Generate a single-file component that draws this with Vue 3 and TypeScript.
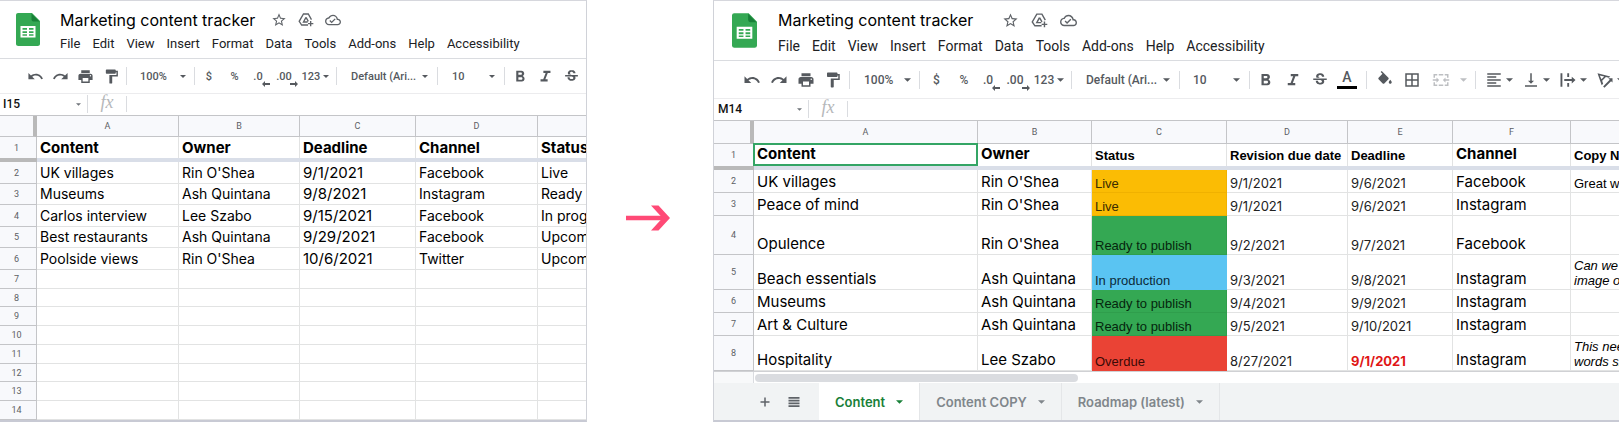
<script setup lang="ts">
interface Cell {
  text: string
  kind?: string
}
interface Row {
  height: number
  cells: Cell[]
}
interface Sheet {
  id: string
  cellName: string
  columns: number[]
  header: Row
  rows: Row[]
  tools: string[]
  selected: boolean
  tabs: string[]
}

const menus = ['File', 'Edit', 'View', 'Insert', 'Format', 'Data', 'Tools', 'Add-ons', 'Help', 'Accessibility']

const baseTools = [
  'undo', 'redo', 'print', 'paint', '|', 'zoom', '|', 'currency', 'percent', 'decLess', 'decMore', 'number', '|',
  'font', '|', 'size', '|', 'bold', 'italic', 'strike',
]
const moreTools = [
  'color', '|', 'fill', 'borders', 'merge', 'mergeMenu', '|', 'align', 'valign', 'wrap', 'rotate',
]

const toolNames: Record<string, string> = {
  undo: 'Undo', redo: 'Redo', print: 'Print', paint: 'Paint format', bold: 'Bold', italic: 'Italic',
  strike: 'Strikethrough', color: 'Text color', fill: 'Fill color', borders: 'Borders', merge: 'Merge cells',
  mergeMenu: 'Merge type', align: 'Horizontal align', valign: 'Vertical align', wrap: 'Text wrapping',
  rotate: 'Text rotation', currency: 'Format as currency', percent: 'Format as percent',
  decLess: 'Decrease decimal places', decMore: 'Increase decimal places', number: 'More formats',
  zoom: 'Zoom', font: 'Font', size: 'Font size',
}
const selects: Record<string, string> = { zoom: '100%', font: 'Default (Ari...', size: '10' }
const labels: Record<string, string> = { currency: '$', percent: '%', decLess: '.0', decMore: '.00', number: '123' }
const icons: Record<string, string> = {
  undo: 'M12.5 8c-2.65 0-5.05.99-6.9 2.6L2 7v9h9l-3.62-3.62c1.39-1.16 3.16-1.88 5.12-1.88 3.54 0 6.55 2.31 7.6 5.5l2.37-.78C21.08 11.03 17.15 8 12.5 8z',
  redo: 'M18.4 10.6C16.55 8.99 14.15 8 11.5 8c-4.65 0-8.58 3.03-9.96 7.22L3.9 16c1.05-3.19 4.05-5.5 7.6-5.5 1.95 0 3.73.72 5.12 1.88L13 16h9V7l-3.6 3.6z',
  print: 'M19 8H5c-1.66 0-3 1.34-3 3v6h4v4h12v-4h4v-6c0-1.66-1.34-3-3-3zm-3 11H8v-5h8v5zm3-7c-.55 0-1-.45-1-1s.45-1 1-1 1 .45 1 1-.45 1-1 1zm-1-9H6v4h12V3z',
  paint: 'M18 4V3c0-.55-.45-1-1-1H5c-.55 0-1 .45-1 1v4c0 .55.45 1 1 1h12c.55 0 1-.45 1-1V6h1v4H9v11c0 .55.45 1 1 1h2c.55 0 1-.45 1-1v-9h8V4h-3z',
  bold: 'M15.6 10.79c.97-.67 1.65-1.77 1.65-2.79 0-2.26-1.75-4-4-4H6v15h8.04c2.09 0 3.71-1.7 3.71-3.79 0-1.52-.86-2.82-2.15-3.42zM9 6.5h3.5c.83 0 1.5.67 1.5 1.5s-.67 1.5-1.5 1.5H9v-3zm4 10H9v-3.5h4c.97 0 1.75.78 1.75 1.75S13.97 16.5 13 16.5z',
  italic: 'M9 4v3h3.2l-3.4 9H5v3h10v-3h-3.2l3.4-9H19V4z',
  strike: 'M7.24 8.75c-.26-.48-.39-1.03-.39-1.67 0-.61.13-1.16.4-1.67.26-.5.63-.93 1.11-1.29.48-.35 1.05-.63 1.7-.83.66-.19 1.39-.29 2.18-.29.81 0 1.54.11 2.21.34.66.22 1.23.54 1.69.94.47.4.83.88 1.08 1.43s.38 1.15.38 1.81h-3.01c0-.31-.05-.59-.15-.85-.09-.27-.24-.49-.44-.68-.2-.19-.45-.33-.75-.44-.3-.1-.66-.16-1.06-.16-.39 0-.74.04-1.03.13s-.53.21-.72.36c-.19.16-.34.34-.44.55-.1.21-.15.43-.15.66 0 .48.25.88.74 1.21.38.25.77.48 1.41.7H7.39c-.05-.08-.11-.17-.15-.25zM21 12v-2H3v2h9.62c.18.07.4.14.55.2.37.17.66.34.87.51s.35.36.43.57c.07.2.11.43.11.69 0 .23-.05.45-.14.66-.09.2-.23.38-.42.53-.19.15-.42.26-.71.35-.29.08-.63.13-1.01.13-.43 0-.83-.04-1.18-.13s-.66-.23-.91-.42c-.25-.19-.45-.44-.59-.75s-.25-.76-.25-1.21H6.4c0 .55.08 1.13.24 1.58s.37.85.65 1.21c.28.35.6.66.98.92.37.26.78.48 1.22.65.44.17.9.3 1.38.39.48.08.96.13 1.44.13.8 0 1.53-.09 2.18-.28s1.21-.45 1.67-.79c.46-.34.82-.77 1.07-1.27s.38-1.07.38-1.71c0-.6-.1-1.14-.31-1.61-.05-.11-.11-.23-.17-.33H21z',
  fill: 'M16.56 8.94L7.62 0 6.21 1.41l2.38 2.38-5.15 5.15c-.59.59-.59 1.54 0 2.12l5.5 5.5c.29.29.68.44 1.06.44s.77-.15 1.06-.44l5.5-5.5c.59-.58.59-1.53 0-2.12zM19 11.5s-2 2.17-2 3.5c0 1.1.9 2 2 2s2-.9 2-2c0-1.33-2-3.5-2-3.5z',
  borders: 'M3 3v18h18V3H3zm8 16H5v-6h6v6zm0-8H5V5h6v6zm8 8h-6v-6h6v6zm0-8h-6V5h6v6z',
  merge: 'M2 4h5v2H4v3H2zM9 4h6v2H9zM17 4h5v5h-2V6h-3zM2 15h2v3h3v2H2zM9 18h6v2H9zM20 15h2v5h-5v-2h3zM1 11h5V8.500l3.500 3.500L6 15.500V13H1zM23 11h-5V8.500L14.500 12l3.500 3.500V13h5z',
  align: 'M15 15H3v2h12v-2zm0-8H3v2h12V7zM3 13h18v-2H3v2zm0 8h18v-2H3v2zM3 3v2h18V3H3z',
  valign: 'M16 13h-3V3h-2v10H8l4 4 4-4zM4 19v2h16v-2H4z',
  wrap: 'M2 3h2.500v18H2zM11 3h2.500v5H11zM11 16h2.500v5H11zM7 10.800h10V7.500l5 4.500-5 4.500v-3.300H7z',
  rotate: 'M2 3l17 4.200-1.800 1.900-4-1-5 5 1.300 4-1.900 1.900L2 3zm3 3l2.300 5L11 7.400 5 6zM9.500 20.500l8.800-8.800-1.900-1.900H22v5.600l-1.900-1.900-8.800 8.800z',
}
const withCaret = ['number', 'mergeMenu', 'align', 'valign', 'wrap', 'rotate']

const r = (height: number, ...texts: string[]): Row => ({
  height,
  cells: texts.map((t) => {
    const [text, kind] = t.split('::')
    return { text, kind }
  }),
})

const sheets: Sheet[] = [
  {
    id: 'before',
    cellName: 'I15',
    columns: [37, 142, 121, 116, 122, 120],
    header: r(21, 'Content', 'Owner', 'Deadline', 'Channel', 'Status'),
    rows: [
      r(22, 'UK villages', "Rin O'Shea", '9/1/2021::date', 'Facebook', 'Live'),
      r(21, 'Museums', 'Ash Quintana', '9/8/2021::date', 'Instagram', 'Ready to publish'),
      r(22, 'Carlos interview', 'Lee Szabo', '9/15/2021::date', 'Facebook', 'In progress'),
      r(21, 'Best restaurants', 'Ash Quintana', '9/29/2021::date', 'Facebook', 'Upcoming'),
      r(22, 'Poolside views', "Rin O'Shea", '10/6/2021::date', 'Twitter', 'Upcoming'),
      ...[19, 18, 19, 19, 19, 18, 19, 19].map((h) => r(h, '', '', '', '', '')),
    ],
    tools: baseTools,
    selected: false,
    tabs: [],
  },
  {
    id: 'after',
    cellName: 'M14',
    columns: [40, 224, 114, 135, 121, 105, 118, 120],
    header: r(22, 'Content', 'Owner', 'Status::small', 'Revision due date::small', 'Deadline::small', 'Channel', 'Copy Notes::small'),
    rows: [
      r(23, 'UK villages', "Rin O'Shea", 'Live::small amber', '9/1/2021::date', '9/6/2021::date', 'Facebook', 'Great work::small'),
      r(23, 'Peace of mind', "Rin O'Shea", 'Live::small amber', '9/1/2021::date', '9/6/2021::date', 'Instagram', ''),
      r(39, 'Opulence', "Rin O'Shea", 'Ready to publish::small green', '9/2/2021::date', '9/7/2021::date', 'Facebook', ''),
      r(35, 'Beach essentials', 'Ash Quintana', 'In production::small blue', '9/3/2021::date', '9/8/2021::date', 'Instagram', 'Can we\nimage of::small note'),
      r(23, 'Museums', 'Ash Quintana', 'Ready to publish::small green', '9/4/2021::date', '9/9/2021::date', 'Instagram', ''),
      r(23, 'Art & Culture', 'Ash Quintana', 'Ready to publish::small green', '9/5/2021::date', '9/10/2021::date', 'Instagram', ''),
      r(35, 'Hospitality', 'Lee Szabo', 'Overdue::small red', '8/27/2021::date', '9/1/2021::date late', 'Instagram', 'This needs\nwords shorter::small note'),
    ],
    tools: [...baseTools, ...moreTools],
    selected: true,
    tabs: ['Content', 'Content COPY', 'Roadmap (latest)'],
  },
]
const letters = 'ABCDEFG'.split('')
const total = (w: number[]) => w.reduce((a, b) => a + b, 0)
</script>

<template>
  <main class="page">
    <template v-for="s in sheets" :key="s.id">
      <div v-if="s.id === 'after'" class="between">
        <svg viewBox="0 0 44 26" aria-hidden="true">
          <path d="M0 13H40" stroke="#ff4a76" stroke-width="4.500" />
          <path d="M25 0.500h7.500L44 13 32.500 25.500H25L36.500 13z" fill="#ff4a76" />
        </svg>
      </div>
      <section class="sheet" :class="s.id">
        <header class="top">
          <svg class="logo" viewBox="0 0 24 33" aria-hidden="true">
            <path d="M2 0h14l8 8v22.500a2.300 2.300 0 0 1-2.300 2.500H2.300A2.300 2.300 0 0 1 0 30.500v-28A2.300 2.300 0 0 1 2 0z" fill="#34a853" />
            <path d="M15.500 0.500L23.500 8.500H17.500a2 2 0 0 1-2-2z" fill="#188038" />
            <path d="M4.500 13h15v11.500h-15zM6.500 15v1.800h4.500V15zM13 15v1.800h4.500V15zM6.500 18.200V20h4.500v-1.800zM13 18.200V20h4.500v-1.800zM6.500 21.300v1.500h4.500v-1.500zM13 21.300v1.500h4.500v-1.500z" fill="#fff" fill-rule="evenodd" />
          </svg>
          <div class="head">
            <div class="title-row">
              <h1>Marketing content tracker</h1>
              <button type="button" aria-label="Star">
                <svg viewBox="0 0 24 24"><path d="M22 9.240l-7.190-.62L12 2 9.190 8.630 2 9.240l5.460 4.730L5.820 21 12 17.270 18.180 21l-1.630-7.030L22 9.240zM12 15.400l-3.760 2.270 1-4.280-3.320-2.880 4.380-.38L12 6.100l1.710 4.040 4.380.38-3.320 2.880 1 4.280L12 15.400z" /></svg>
              </button>
              <button type="button" aria-label="Add to Drive">
                <svg viewBox="0 0 24 24" fill="none" class="line"><path d="M15 19.500H5.500L1.800 14 8.200 3h7.200l4.800 8.500" /><path d="M12 8l-3.800 7h6.300M12 8l3.500 6" /><path d="M19 13.500v8M15 17.500h8" /></svg>
              </button>
              <button type="button" aria-label="Document status">
                <svg viewBox="0 0 24 24"><path d="M19.350 10.040C18.670 6.590 15.640 4 12 4 9.110 4 6.610 5.640 5.360 8.040 2.350 8.360 0 10.900 0 14c0 3.310 2.690 6 6 6h13c2.760 0 5-2.240 5-5 0-2.640-2.050-4.780-4.650-4.960zM19 18H6c-2.210 0-4-1.790-4-4 0-2.050 1.530-3.760 3.560-3.970l1.070-.11.5-.95C8.080 7.140 9.940 6 12 6c2.620 0 4.880 1.860 5.390 4.430l.3 1.500 1.530.11c1.560.1 2.780 1.410 2.780 2.960 0 1.650-1.350 3-3 3zm-9-3.820l-2.090-2.090L6.500 13.500 10 17l6.010-6.010-1.410-1.410z" /></svg>
              </button>
            </div>
            <nav class="menus">
              <button v-for="m in menus" :key="m" type="button">{{ m }}</button>
            </nav>
          </div>
        </header>

        <div class="toolbar" role="toolbar" aria-label="Formatting">
          <template v-for="(t, i) in s.tools" :key="i">
            <span v-if="t === '|'" class="sep"></span>
            <label v-else-if="selects[t]" class="pick" :class="t">
              <select :aria-label="toolNames[t]"><option>{{ selects[t] }}</option></select>
              <svg class="caret" viewBox="0 0 8 4"><path d="M0 0h8L4 4z" /></svg>
            </label>
            <button v-else type="button" :class="[t, { menu: withCaret.includes(t) }]" :aria-label="toolNames[t]">
              <template v-if="labels[t]">{{ labels[t] }}</template>
              <svg v-if="t === 'decLess'" class="arrow" viewBox="0 0 8 6"><path d="M0 3l3-3v2h5v2H3v2z" /></svg>
              <svg v-if="t === 'decMore'" class="arrow" viewBox="0 0 8 6"><path d="M8 3L5 0v2H0v2h5v2z" /></svg>
              <span v-if="t === 'color'" class="letter">A</span>
              <svg v-if="icons[t]" class="icon" viewBox="0 0 24 24"><path :d="icons[t]" /></svg>
              <svg v-if="withCaret.includes(t)" class="caret" viewBox="0 0 8 4"><path d="M0 0h8L4 4z" /></svg>
            </button>
          </template>
        </div>

        <div class="formula">
          <div class="name-box">
            <input type="text" :value="s.cellName" aria-label="Name box" />
            <button type="button" aria-label="Named ranges"><svg class="caret" viewBox="0 0 8 4"><path d="M0 0h8L4 4z" /></svg></button>
          </div>
          <label :for="`fx-${s.id}`">fx</label>
          <input :id="`fx-${s.id}`" type="text" class="fx-input" />
        </div>

        <div class="grid">
          <table :style="{ width: total(s.columns) + 'px' }">
            <colgroup><col v-for="(w, i) in s.columns" :key="i" :style="{ width: w + 'px' }" /></colgroup>
            <thead>
              <tr class="letters">
                <td class="corner"></td>
                <th v-for="(w, i) in s.columns.slice(1)" :key="i" scope="col">{{ i < s.columns.length - 2 ? letters[i] : '' }}</th>
              </tr>
            </thead>
            <tbody>
              <tr class="names" :style="{ height: s.header.height + 'px' }">
                <th scope="row">1</th>
                <td v-for="(c, i) in s.header.cells" :key="i" :class="[c.kind, { selected: s.selected && i === 0 }]">{{ c.text }}</td>
              </tr>
              <tr class="frozen"><td v-for="(w, i) in s.columns" :key="i"></td></tr>
              <tr v-for="(row, n) in s.rows" :key="n" :style="{ height: row.height + 'px' }">
                <th scope="row">{{ n + 2 }}</th>
                <td v-for="(c, i) in row.cells" :key="i" :class="c.kind">{{ c.text }}</td>
              </tr>
            </tbody>
          </table>
        </div>

        <template v-if="s.tabs.length">
          <div class="scroll"><span class="gutter"></span><span class="thumb"></span></div>
          <footer class="tabs">
            <button type="button" class="tab-tool" aria-label="Add sheet"><svg viewBox="0 0 24 24"><path d="M21 13.500h-7.500V21h-3v-7.500H3v-3h7.500V3h3v7.500H21z" /></svg></button>
            <button type="button" class="tab-tool" aria-label="All sheets"><svg viewBox="0 0 24 24"><path d="M1 2h22v3.500H1zM1 7.500h22V11H1zM1 13h22v3.500H1zM1 18.500h22V22H1z" /></svg></button>
            <button v-for="(t, i) in s.tabs" :key="t" type="button" class="tab" :class="{ active: i === 0 }">
              {{ t }}<svg class="caret" viewBox="0 0 8 4"><path d="M0 0h8L4 4z" /></svg>
            </button>
          </footer>
        </template>
      </section>
    </template>
  </main>
</template>

<style>
body { background: #fff; }
</style>

<style scoped>
.page {
  display: grid;
  grid-template-columns: 587fr 126fr 906fr;
  font-family: Roboto, "Liberation Sans", sans-serif;
  color: #202124;
}
.page * { box-sizing: border-box; }
button, input, select {
  font: inherit;
  color: inherit;
  border: 0;
  padding: 0;
  margin: 0;
  background: none;
  min-width: 0;
}
select { appearance: none; }
svg { display: block; fill: currentColor; flex: none; }
svg.line { fill: none; stroke: currentColor; stroke-width: 2; }

.between { display: flex; align-items: center; justify-content: center; padding-right: 4px; }
.between svg { width: 44px; height: 26px; margin-top: 14px; }

.sheet {
  min-width: 0;
  overflow: hidden;
  display: flex;
  flex-direction: column;
  border-top: 1px solid #d6d7dd;
  border-bottom: 2px solid #c8cad4;
}
.before { border-right: 1px solid #d0d2d8; }
.after { border-left: 1px solid #d0d2d8; }

.top { display: flex; border-bottom: 1px solid #dadce0; }
.before .top { height: 58px; padding: 12px 0 0 16px; gap: 20px; }
.after .top { height: 60px; padding: 12px 0 0 18px; gap: 21px; }
.before .logo { width: 24px; height: 33px; }
.after .logo { width: 25px; height: 35px; }
.head { display: flex; flex-direction: column; }
.title-row { display: flex; align-items: center; color: #5f6368; }
h1 { margin: 0; font-family: Inter, sans-serif; font-weight: 400; font-size: 16px; color: #000; white-space: nowrap; line-height: 20px; }
.before .title-row { height: 14px; gap: 11px; }
.after .title-row { height: 14px; gap: 12px; }
.before h1 { width: 200px; }
.after h1 { width: 212px; }
.before .title-row svg { width: 16px; height: 16px; }
.after .title-row svg { width: 17px; height: 17px; }
.menus { display: flex; gap: 12px; }
.before .menus { font-size: 13px; line-height: 15px; margin-top: 9px; }
.after .menus { font-size: 14px; line-height: 16px; margin-top: 11px; }

.toolbar {
  display: grid;
  align-items: center;
  border-bottom: 1px solid #ececee;
  color: #55595e;
  font-weight: 500;
  font-size: 11px;
}
.before .toolbar {
  height: 35px;
  padding-left: 22px;
  grid-template-columns: 26px 25px 25px 26px 5px 63px 4px 26px 25px 24px 28px 33px 8px 94px 7px 60px 7px 24px 26px 26px;
}
.after .toolbar {
  height: 38px;
  padding-left: 24px;
  font-size: 12px;
  grid-template-columns: 27px 27px 27px 27px 7px 64px 5px 29px 26px 24px 30px 36px 8px 101px 6px 64px 6px 28px 26px 27px 28px 10px 27px 28px 30px 14px 10px 37px 37px 37px 37px;
}
.toolbar button { display: flex; align-items: center; justify-content: center; height: 24px; }
.toolbar .menu { gap: 3px; }
.before .icon { width: 17px; height: 17px; }
.after .icon { width: 18px; height: 18px; }
.caret { width: 6px; height: 3px; }
.after .caret { width: 7px; height: 4px; }
.sep { justify-self: center; width: 1px; height: 18px; background: #dadce0; }
.pick { display: grid; align-items: center; }
.pick select { grid-area: 1 / 1; padding-left: 11px; width: 100%; height: 20px; }
.pick .caret { grid-area: 1 / 1; justify-self: end; margin-right: 6px; pointer-events: none; }
.toolbar .decLess, .toolbar .decMore { position: relative; padding-right: 2px; }
.arrow { position: absolute; right: 1px; bottom: 1px; width: 8px; height: 6px; }
.toolbar .color { flex-direction: column; }
.letter { font-size: 14px; line-height: 15px; }
.color::after { content: ""; width: 20px; height: 3px; background: #000; margin-top: 1px; }
.toolbar .merge, .toolbar .mergeMenu { color: #bdbfc2; }

.formula { display: flex; align-items: center; height: 21px; font-size: 12px; padding-bottom: 1px; }
.name-box { display: flex; align-items: center; justify-content: space-between; height: 18px; padding-right: 6px; border-right: 1px solid #dadce0; color: #111; font-weight: 500; }
.before .name-box { width: 88px; padding-left: 3px; }
.after .name-box { width: 95px; padding-left: 4px; }
.name-box input { width: 60px; }
.name-box .caret { color: #70757a; width: 5px; height: 3px; }
.formula label { width: 39px; text-align: center; font: italic 18px/12px "Liberation Serif", serif; color: #b5b7ba; border-right: 1px solid #dadce0; height: 16px; }
.fx-input { flex: 1; }

.grid { border-top: 1px solid #c4c5c8; overflow: hidden; }
table { table-layout: fixed; border-collapse: separate; border-spacing: 0; background: #fff; }
td, th {
  padding: 0 3px;
  border: solid #e2e3e3;
  border-width: 0 1px 1px 0;
  overflow: hidden;
  white-space: pre;
  text-align: left;
  font-weight: 400;
}
td { font-family: Inter, sans-serif; color: #000; }
th { background: #f8f9fc; color: #5c6064; font-size: 9px; line-height: 10px; text-align: center; border-color: #c4c5c8; }
.before th[scope="row"] { padding-right: 6px; }
.letters { height: 21px; }
.after .letters { height: 23px; }
.corner { background: #f8f9fc; border-right: 4px solid #b9b9b9; border-bottom-color: #c4c5c8; }
.before td { font-size: 14px; line-height: 18px; }
.before .names td, .before td.date { font-size: 15px; }
.after td { font-size: 15px; line-height: 18px; vertical-align: bottom; padding-bottom: 1px; }
.before .names td, .after .names td { font-weight: 700; border-bottom: 0; }
.names th { border-bottom: 0; }
.frozen { height: 4px; }
.before .frozen td, .after .frozen td { padding: 0; line-height: 0; height: 4px; border: 0; background: #d9dee8; }
.before .frozen td:first-child, .after .frozen td:first-child { background: #b9b9b9; }
.after td.small { font-family: "Liberation Sans", Arial, sans-serif; font-size: 13px; line-height: 15px; }
.after td.date { font-size: 13px; line-height: 15px; color: #222; }
.after td.late { font-weight: 700; color: #e01616; }
.after td.note { font-style: italic; }
.after td.amber { background: #fbbc04; border-color: #f0b100; color: #3a2c00; }
.after td.green { background: #34a853; border-color: #2f9e4c; color: #05260e; }
.after td.blue { background: #5ac4f2; border-color: #5ac4f2; color: #0c2a38; }
.after td.red { background: #ea4335; border-color: #ea4335; color: #3a0a06; }
.after .names td { padding-bottom: 3px; }
.after td.selected { position: relative; overflow: visible; }
.selected::after { content: ""; position: absolute; inset: -1px -1px 0 -1px; border: 2px solid #34a565; }

.scroll { display: flex; align-items: center; height: 12px; border-top: 1px solid #d0d1d4; }
.gutter { width: 40px; height: 100%; background: #f8f9fa; border-right: 1px solid #dadce0; }
.thumb { width: 323px; height: 8px; margin-left: 1px; border-radius: 4px; background: #dadce0; }
.tabs { display: flex; flex: 1; background: #f1f3f4; padding-left: 36px; font-family: Inter, sans-serif; font-weight: 600; font-size: 13px; color: #80868b; }
.tab-tool { width: 29px; display: flex; align-items: center; justify-content: center; color: #5f6368; }
.tab-tool svg { width: 12px; height: 12px; }
.tab { display: flex; align-items: center; gap: 11px; padding: 0 16px; border-right: 1px solid #e4e6e8; white-space: nowrap; }
.tab.active { background: #fff; color: #188038; margin-left: 11px; }
</style>
